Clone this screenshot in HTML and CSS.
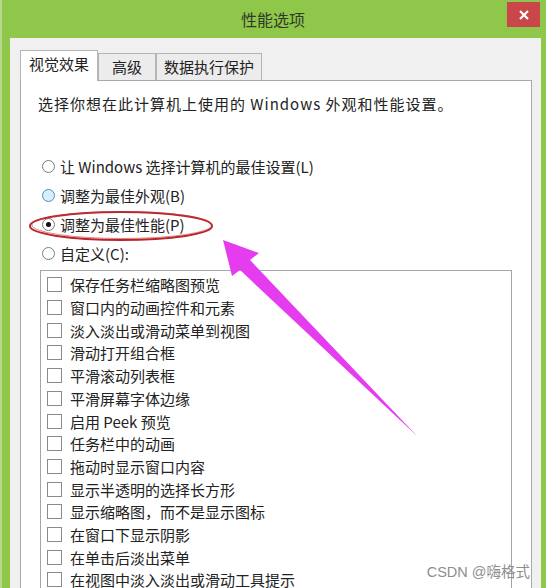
FILE: index.html
```html
<!DOCTYPE html>
<html lang="zh-CN">
<head>
  <meta charset="UTF-8" />
  <meta name="viewport" content="width=device-width, initial-scale=1.0"/>
  <title>性能选项</title>
  <link rel="stylesheet" href="styles.css">
</head>
<body>
  <div class="window">
    <div class="titlebar">
      <span></span>
      <h1>性能选项</h1>
      <button class="close">
        <svg width="12" height="12" viewBox="0 0 12 12"><path d="M2 2 L10 10 M10 2 L2 10" stroke="#fff" stroke-width="2.2"/></svg>
      </button>
    </div>

    <div class="dialog">
      <div class="tabs">
        <div class="tab active">视觉效果</div>
        <div class="tab">高级</div>
        <div class="tab">数据执行保护</div>
      </div>

      <div class="panel">
        <p class="intro">选择你想在此计算机上使用的 Windows 外观和性能设置。</p>

        <div class="options">
          <label class="radio"><span class="dot"></span>让 Windows 选择计算机的最佳设置(L)</label>
          <label class="radio"><span class="dot hover"></span>调整为最佳外观(B)</label>
          <label class="radio"><span class="dot checked"></span>调整为最佳性能(P)</label>
          <label class="radio"><span class="dot"></span>自定义(C):</label>
        </div>

        <ul class="list">
          <li><span class="box"></span>保存任务栏缩略图预览</li>
          <li><span class="box"></span>窗口内的动画控件和元素</li>
          <li><span class="box"></span>淡入淡出或滑动菜单到视图</li>
          <li><span class="box"></span>滑动打开组合框</li>
          <li><span class="box"></span>平滑滚动列表框</li>
          <li><span class="box"></span>平滑屏幕字体边缘</li>
          <li><span class="box"></span>启用 Peek 预览</li>
          <li><span class="box"></span>任务栏中的动画</li>
          <li><span class="box"></span>拖动时显示窗口内容</li>
          <li><span class="box"></span>显示半透明的选择长方形</li>
          <li><span class="box"></span>显示缩略图，而不是显示图标</li>
          <li><span class="box"></span>在窗口下显示阴影</li>
          <li><span class="box"></span>在单击后淡出菜单</li>
          <li><span class="box"></span>在视图中淡入淡出或滑动工具提示</li>
        </ul>
      </div>
    </div>

    <!-- annotation drawn over the screenshot -->
    <svg class="marks" width="546" height="588" viewBox="0 0 546 588">
      <ellipse cx="121" cy="226" rx="91" ry="14" fill="none" stroke="#b8262c" stroke-width="2"/>
      <ellipse cx="122" cy="225" rx="90" ry="13.5" fill="none" stroke="#c9383d" stroke-width="1" opacity="0.6"/>
      <polygon points="223,240 259,253 250,260 417,436 240,270 232,276" fill="#e63cef"/>
    </svg>

    <div class="watermark">CSDN @嗨格式</div>
  </div>
</body>
</html>
```

FILE: styles.css
```css
body {
  margin: 0;
  background-color: #8fc74a;
  font-family: "Noto Sans CJK SC", sans-serif;
  color: #222;
}
.window {
  position: relative;
  height: 588px;
  overflow: hidden;
  box-shadow: inset 2px 0 #b5da8c;
}
.titlebar {
  height: 38px;
  display: grid;
  grid-template-columns: 1fr auto 1fr;
}
.titlebar h1 {
  margin: 0;
  align-self: center;
  font-size: 16px;
  font-weight: normal;
  color: #2f3a28;
}
.close {
  justify-self: end;
  width: 33px;
  height: 25px;
  margin: 2px 6px 0 0;
  padding: 0;
  border: none;
  background-color: #c9464a;
  display: flex;
  align-items: center;
  justify-content: center;
}
.dialog {
  margin: 0 5px 0 10px;
  height: 550px;
  padding: 12px 9px 0 10px;
  background-color: #f0f0f0;
  box-sizing: border-box;
}
.tabs {
  display: flex;
  align-items: flex-end;
  height: 30px;
}
.tab {
  height: 26px;
  line-height: 25px;
  font-size: 15px;
  padding: 0 13px;
  border: 1px solid #b5b5b5;
  border-bottom: none;
  background-color: #ececec;
  white-space: nowrap;
}
.tab.active {
  position: relative;
  z-index: 1;
  height: 30px;
  line-height: 26px;
  padding: 0 8px;
  margin-bottom: -1px;
  background-color: #fff;
}
.tab:last-child {
  padding: 0 7px;
}
.panel {
  border: 1px solid #a8a8a8;
  background-color: #fff;
  height: 520px;
}
.intro {
  margin: 0;
  padding: 13px 0 0 17px;
  font-size: 15px;
  line-height: 20px;
  letter-spacing: 1px;
}
.options {
  padding: 38.6px 0 0 21px;
}
.radio {
  display: flex;
  align-items: center;
  gap: 5px;
  height: 28.7px;
  font-size: 15px;
}
.dot {
  width: 11px;
  height: 11px;
  border: 1px solid #7c7c7c;
  border-radius: 50%;
  background-color: #fff;
  display: flex;
  align-items: center;
  justify-content: center;
}
.dot.hover {
  border-color: #4d8ec0;
  background-color: #d9eefb;
}
.dot.checked::after {
  content: "";
  width: 5px;
  height: 5px;
  border-radius: 50%;
  background-color: #111;
}
.list {
  list-style: none;
  margin: 2.6px 19px 0 19px;
  padding: 2.6px 0 0 6px;
  border: 1px solid #a5a5a5;
  height: 400px;
}
.list li {
  display: flex;
  align-items: center;
  gap: 8px;
  height: 22.7px;
  font-size: 15px;
  white-space: nowrap;
}
.box {
  width: 13px;
  height: 13px;
  border: 1px solid #8a8a8a;
  background-color: #fff;
}
.marks {
  position: absolute;
  left: 0;
  top: 0;
  pointer-events: none;
}
.watermark {
  position: absolute;
  right: 16px;
  bottom: 8px;
  font-family: "Liberation Sans", "Noto Sans CJK SC", sans-serif;
  font-size: 14.5px;
  line-height: 16px;
  color: #8e8e8e;
}
```
